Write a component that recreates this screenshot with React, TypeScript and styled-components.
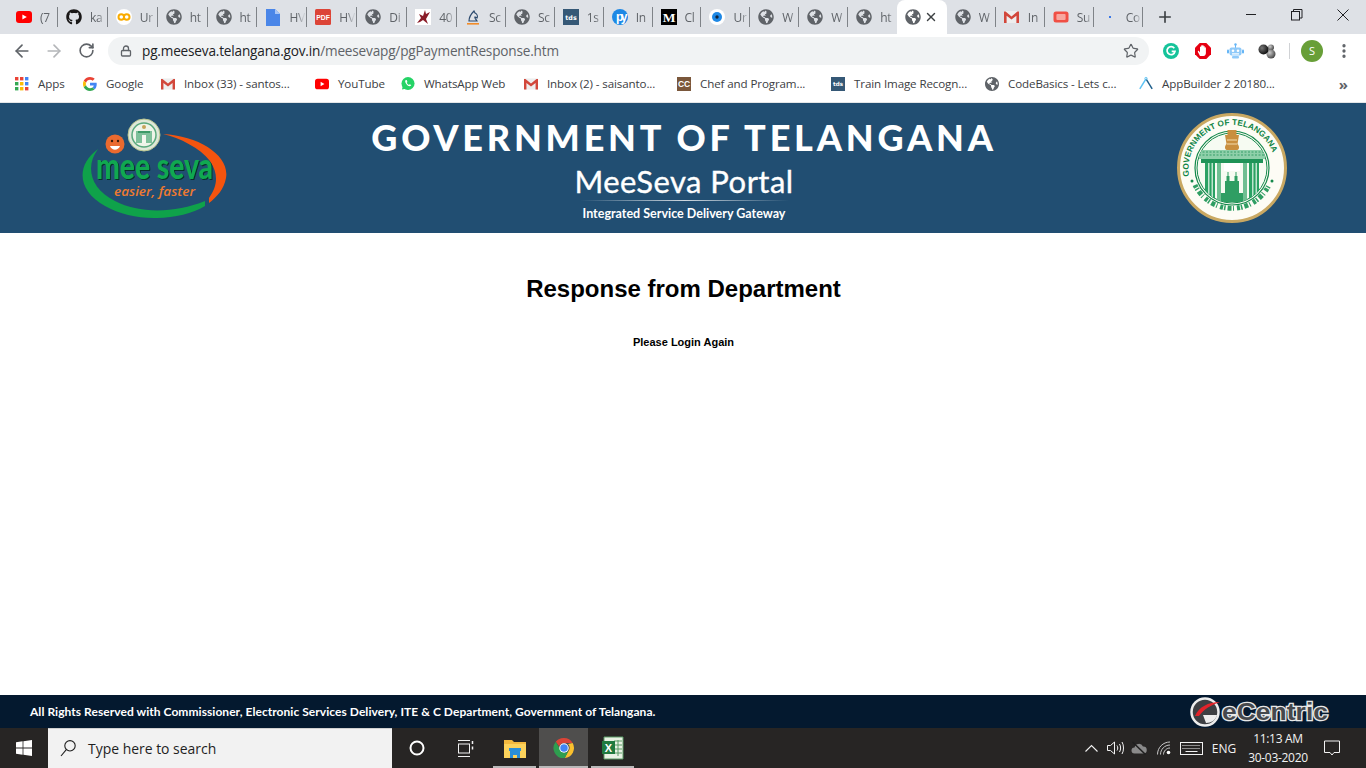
import React from "react";
import styled, { createGlobalStyle } from "styled-components";
import { FaGithub, FaGlobeAmericas } from "react-icons/fa";
import { ArrowLeft, ArrowRight, Lock, MoreVertical, Plus, RotateCw, Star, X } from "lucide-react";

const Global = createGlobalStyle`
  html, body { margin: 0; padding: 0; background: #fff; overflow: hidden; }
  * { box-sizing: border-box; }
`;

const Page = styled.div`
  width: 1366px;
  height: 768px;
  display: flex;
  flex-direction: column;
  font-family: "Open Sans", "Liberation Sans", sans-serif;
`;

/* ---------- tab strip ---------- */
const TabStrip = styled.div`
  height: 34px;
  flex: none;
  display: flex;
  background: #dee1e6;
  padding-left: 8px;
`;
const Tab = styled.div<{ $active?: boolean; $noSep?: boolean; $w: number }>`
  width: ${(p) => p.$w}px;
  flex: none;
  display: flex;
  align-items: center;
  padding: 0 0 0 8px;
  gap: ${(p) => (p.$active ? "3px" : "8px")};
  position: relative;
  background: ${(p) => (p.$active ? "#fff" : "transparent")};
  border-radius: ${(p) => (p.$active ? "8px 8px 0 0" : "0")};
  &::after {
    content: "";
    display: ${(p) => (p.$noSep ? "none" : "block")};
    position: absolute;
    right: 0;
    top: 7px;
    width: 1px;
    height: 20px;
    background: #7f8388;
  }
`;
const TabIcon = styled.span`
  width: 16px;
  height: 16px;
  flex: none;
  display: flex;
  align-items: center;
  justify-content: center;
  color: #5f6368;
`;
const TabLabel = styled.span`
  font-size: 12px;
  color: #5f6368;
  white-space: nowrap;
  width: 16px;
  letter-spacing: -0.3px;
  -webkit-mask-image: linear-gradient(90deg, #000 50%, rgba(0, 0, 0, 0.15) 90%);
  mask-image: linear-gradient(90deg, #000 50%, rgba(0, 0, 0, 0.15) 90%);
`;
const TabClose = styled.span`
  display: flex;
  color: #3c4043;
`;
const NewTab = styled.div`
  width: 22px;
  margin-left: 11px;
  display: flex;
  align-items: center;
  justify-content: center;
  color: #3c4043;
`;
const WindowControls = styled.div`
  margin-left: auto;
  display: flex;
`;
const WindowButton = styled.div`
  width: 46px;
  height: 29px;
  display: flex;
  align-items: center;
  justify-content: center;
  color: #202124;
`;

/* ---------- toolbar ---------- */
const Toolbar = styled.div`
  height: 33px;
  flex: none;
  display: flex;
  align-items: center;
  padding-left: 6px;
  background: #fff;
`;
const ToolButton = styled.div<{ $dim?: boolean }>`
  width: 32px;
  height: 28px;
  flex: none;
  display: flex;
  align-items: center;
  justify-content: center;
  color: ${(p) => (p.$dim ? "#b4b6b9" : "#5f6368")};
`;
const Omnibox = styled.div`
  width: 1041px;
  height: 28px;
  margin: 0 6px;
  flex: none;
  border-radius: 14px;
  background: #f1f3f4;
  display: flex;
  align-items: center;
  padding: 0 10px 0 12px;
  color: #5f6368;
`;
const Url = styled.div`
  margin-left: 10px;
  flex: 1;
  font-size: 13.6px;
  letter-spacing: -0.18px;
  color: #5f6368;
  white-space: nowrap;
  b {
    font-weight: 400;
    color: #202124;
  }
`;
const ToolSep = styled.div`
  width: 1px;
  height: 16px;
  margin: 0 6px;
  background: #d0d2d5;
  flex: none;
`;
const Avatar = styled.div`
  width: 22px;
  height: 22px;
  border-radius: 50%;
  background: #689f38;
  color: #fff;
  font-size: 11px;
  display: flex;
  align-items: center;
  justify-content: center;
`;

/* ---------- bookmarks ---------- */
const BookmarkBar = styled.div`
  height: 36px;
  flex: none;
  display: flex;
  align-items: center;
  padding: 0 0 2px 15px;
  background: #fff;
  border-bottom: 1px solid #e4e6e8;
`;
const Bookmark = styled.div<{ $w: number }>`
  width: ${(p) => p.$w}px;
  flex: none;
  display: flex;
  align-items: center;
  gap: 9px;
`;
const BookmarkIcon = styled.span`
  width: 14px;
  height: 16px;
  flex: none;
  display: flex;
  align-items: center;
  justify-content: center;
  color: #5f6368;
`;
const BookmarkText = styled.span`
  font-size: 11.6px;
  letter-spacing: -0.12px;
  color: #3c4043;
  white-space: nowrap;
`;
const Overflow = styled.div`
  margin-left: auto;
  margin-right: 18px;
  color: #5f6368;
  font-size: 15px;
  line-height: 16px;
  font-weight: 700;
`;

/* ---------- site ---------- */
const SiteHeader = styled.header`
  height: 130px;
  flex: none;
  background: #214e72;
  display: grid;
  grid-template-columns: 1fr auto 1fr;
  align-items: center;
`;
const LogoCell = styled.div`
  padding-left: 81px;
  display: flex;
`;
const SealCell = styled.div`
  padding-right: 79px;
  display: flex;
  justify-content: flex-end;
`;
const HeaderText = styled.div`
  align-self: start;
  display: flex;
  flex-direction: column;
  align-items: center;
  color: #fff;
  font-family: Lato, "Open Sans", sans-serif;
  padding: 12px 0 0 2px;
`;
const SiteTitle = styled.div`
  font-size: 36px;
  line-height: 44px;
  font-weight: 900;
  letter-spacing: 3.8px;
  white-space: nowrap;
`;
const SiteSub = styled.div`
  font-size: 31px;
  line-height: 44px;
  font-weight: 400;
  letter-spacing: 0.45px;
  -webkit-text-stroke: 0.35px #fff;
  white-space: nowrap;
`;
const SiteRule = styled.div`
  width: 209px;
  height: 1px;
  margin-top: -3px;
  background: linear-gradient(90deg, transparent, #cfd8df 50%, transparent);
`;
const SiteTag = styled.div`
  font-size: 12.5px;
  line-height: 25px;
  font-weight: 700;
  white-space: nowrap;
`;
const Main = styled.main`
  flex: 1;
  background: #fff;
  display: flex;
  flex-direction: column;
  align-items: center;
  padding: 42px 0 0 1px;
  font-family: "Liberation Sans", Arial, sans-serif;
  color: #000;
`;
const Heading = styled.h1`
  margin: 0;
  font-size: 24px;
  line-height: 28px;
  font-weight: 700;
`;
const Message = styled.p`
  margin: 32px 0 0;
  font-size: 11px;
  line-height: 14px;
  font-weight: 700;
`;
const SiteFooter = styled.footer`
  height: 33px;
  flex: none;
  background: #04192f;
  display: flex;
  align-items: center;
  justify-content: space-between;
  padding: 0 35px 0 30px;
  color: #fff;
  font-family: Lato, "Open Sans", sans-serif;
  font-size: 12px;
  letter-spacing: 0.05px;
  font-weight: 700;
`;

/* ---------- taskbar ---------- */
const Taskbar = styled.div`
  height: 40px;
  flex: none;
  background: #272524;
  display: flex;
  align-items: stretch;
  color: #fff;
`;
const StartButton = styled.div`
  width: 48px;
  display: flex;
  align-items: center;
  justify-content: center;
`;
const SearchBox = styled.div`
  width: 344px;
  background: #f2f2f2;
  display: flex;
  align-items: center;
  gap: 12px;
  padding-left: 12px;
  color: #1f1f1f;
  font-size: 13.95px;
  border-top: 1px solid #d0d0d0;
`;
const TaskButton = styled.div<{ $active?: boolean; $running?: boolean }>`
  width: 49px;
  flex: none;
  display: flex;
  align-items: center;
  justify-content: center;
  position: relative;
  background: ${(p) => (p.$active ? "#4f4e4d" : "transparent")};
  &::after {
    content: "";
    display: ${(p) => (p.$running ? "block" : "none")};
    position: absolute;
    left: ${(p) => (p.$active ? "0" : "3px")};
    right: ${(p) => (p.$active ? "0" : "3px")};
    bottom: 0;
    height: 2px;
    background: #b9b9b9;
  }
`;
const Tray = styled.div`
  margin-left: auto;
  display: flex;
  align-items: center;
`;
const TrayIcon = styled.div<{ $w: number }>`
  width: ${(p) => p.$w}px;
  height: 100%;
  flex: none;
  display: flex;
  align-items: center;
  justify-content: center;
  font-size: 12px;
  color: #f2f2f2;
`;
const Clock = styled.div`
  width: 76px;
  text-align: center;
  font-size: 12px;
  line-height: 19px;
  color: #f2f2f2;
  letter-spacing: -0.3px;
`;

/* ---------- icons ---------- */
const Globe = ({ size = 16 }: { size?: number }) => <FaGlobeAmericas size={size} color="#5f6368" />;

const Youtube = ({ w = 16 }: { w?: number }) => (
  <svg width={w} height={12} viewBox="0 0 16 12">
    <rect width="16" height="12" rx="3" fill="#f00" />
    <path d="M6.4 3.4 L10.8 6 L6.4 8.6Z" fill="#fff" />
  </svg>
);
const Gmail = () => (
  <svg width="15" height="12" viewBox="0 0 15 12">
    <path d="M0 0h15v12h-15z" fill="#eee" />
    <path d="M0 12V0.6h1.6L7.5 5.4 13.4.6H15V12h-2.6V4.8L7.5 8.6 2.6 4.8V12z" fill="#d2473b" />
  </svg>
);
const Colab = () => (
  <svg width="16" height="16" viewBox="0 0 16 16">
    <circle cx="8" cy="8" r="8" fill="#fff" />
    <circle cx="5.3" cy="8" r="2.8" fill="none" stroke="#f9ab00" strokeWidth="2" />
    <circle cx="10.7" cy="8" r="2.8" fill="none" stroke="#f9ab00" strokeWidth="2" />
  </svg>
);
const Doc = () => (
  <svg width="14" height="17" viewBox="0 0 14 17">
    <path d="M0 0h9l5 5v12H0z" fill="#4a86e8" />
    <path d="M9 0l5 5H9z" fill="#a9c6f5" />
  </svg>
);
const Pdf = () => (
  <svg width="16" height="16" viewBox="0 0 16 16">
    <rect width="16" height="16" rx="1.5" fill="#dc4437" />
    <text x="8" y="10.8" textAnchor="middle" fontSize="6.8" fontWeight="700" fontFamily="Liberation Sans" fill="#fff">PDF</text>
  </svg>
);
const Eagle = () => (
  <svg width="16" height="16" viewBox="0 0 16 16">
    <rect width="16" height="16" fill="#fff" />
    <path d="M2 14 L6 9 L4 5 L8 7 L10 1 L11 5 L15 3 L11 10 L13 15 L8 11 L5 13z" fill="#8a1c28" />
  </svg>
);
const Knight = () => (
  <svg width="16" height="16" viewBox="0 0 16 16">
    <path d="M4 12 C4 8 6 5 9 2 L10 4 C12 5 13 7 12 9 L10 8 C9 9 11 10 12 12z" fill="none" stroke="#2c4a6e" strokeWidth="1.2" />
    <rect x="2" y="14" width="12" height="1.6" fill="#f28c28" />
  </svg>
);
const Tds = ({ s = 16 }: { s?: number }) => (
  <svg width={s} height={s} viewBox="0 0 16 16">
    <rect width="16" height="16" fill="#355876" />
    <text x="8" y="10.5" textAnchor="middle" fontSize="6.4" fontWeight="700" fontFamily="DejaVu Sans" fill="#fff">tds</text>
  </svg>
);
const Py = () => (
  <svg width="16" height="16" viewBox="0 0 16 16">
    <circle cx="8" cy="8" r="8" fill="#1e88e5" />
    <text x="4" y="12" fontSize="12" fontWeight="700" fontFamily="Liberation Sans" fill="#fff" textLength="11.5">py</text>
  </svg>
);
const Medium = () => (
  <svg width="16" height="16" viewBox="0 0 16 16">
    <rect width="16" height="16" fill="#000" />
    <text x="8" y="13" textAnchor="middle" fontSize="13.5" fontWeight="700" fontFamily="Liberation Serif" fill="#fff">M</text>
  </svg>
);
const Target = () => (
  <svg width="16" height="16" viewBox="0 0 16 16">
    <circle cx="8" cy="8" r="8" fill="#fff" />
    <circle cx="8" cy="8" r="5" fill="#1e88e5" />
    <circle cx="8" cy="8" r="1.7" fill="#10233a" />
  </svg>
);
const ZoomRec = () => (
  <svg width="16" height="12" viewBox="0 0 16 12">
    <rect x="0.5" y="0.5" width="15" height="11" rx="2.5" fill="#f05045" />
    <rect x="3.4" y="3" width="9.2" height="6" rx="1" fill="#f8a79f" />
  </svg>
);
const Dot = () => (
  <svg width="16" height="16" viewBox="0 0 16 16">
    <rect x="7" y="7" width="2" height="2" fill="#3b78e7" />
  </svg>
);
const AppsGrid = () => (
  <svg width="14" height="14" viewBox="0 0 14 14">
    {["#ea4335", "#ea4335", "#4285f4", "#34a853", "#fbbc05", "#4285f4", "#34a853", "#fbbc05", "#ea4335"].map((c, i) => (
      <rect key={i} x={(i % 3) * 5} y={Math.floor(i / 3) * 5} width="3.4" height="3.4" fill={c} />
    ))}
  </svg>
);
const GoogleG = () => (
  <svg width="14" height="14" viewBox="0 0 48 48">
    <path fill="#EA4335" d="M24 9.5c3.5 0 6.7 1.2 9.2 3.6l6.9-6.9C35.9 2.4 30.5 0 24 0 14.6 0 6.5 5.4 2.6 13.2l8 6.2C12.4 13.7 17.7 9.5 24 9.5z" />
    <path fill="#4285F4" d="M47 24.5c0-1.6-.1-3.1-.4-4.5H24v9h12.9c-.6 3-2.2 5.5-4.7 7.2l7.7 6c4.5-4.1 7.1-10.2 7.1-17.7z" />
    <path fill="#FBBC05" d="M10.5 28.6c-.5-1.4-.8-3-.8-4.6s.3-3.2.8-4.6l-8-6.2C.9 16.4 0 20.1 0 24s.9 7.6 2.6 10.8l7.9-6.2z" />
    <path fill="#34A853" d="M24 48c6.5 0 11.9-2.1 15.9-5.8l-7.7-6c-2.2 1.4-5 2.3-8.2 2.3-6.3 0-11.6-4.2-13.5-9.9l-8 6.2C6.5 42.6 14.6 48 24 48z" />
  </svg>
);
const CC = () => (
  <svg width="16" height="16" viewBox="0 0 16 16">
    <rect width="16" height="16" fill="#7a573b" />
    <text x="8" y="11.8" textAnchor="middle" fontSize="10" fontWeight="700" fontFamily="Liberation Sans" fill="#fff" textLength="14" lengthAdjust="spacingAndGlyphs">CC</text>
  </svg>
);
const Compass = () => (
  <svg width="17" height="17" viewBox="0 0 17 17" fill="none" strokeWidth="1.8">
    <path d="M8.5 3 L1 15" stroke="#5cc3f5" />
    <path d="M8.5 3 L16 15" stroke="#1f5f8b" />
    <circle cx="8.5" cy="2.5" r="1.5" stroke="#5cc3f5" strokeWidth="1" />
  </svg>
);
const WhatsApp = () => (
  <svg width="15" height="15" viewBox="0 0 15 15">
    <circle cx="7.5" cy="7.5" r="7" fill="#25d366" />
    <path d="M1 14l1-4 3 3z" fill="#25d366" />
    <path d="M5.2 3.8c-1 .7-1 2 .1 3.6 1 1.5 2.5 3 4 3 .9 0 1.5-.6 1.6-1.3L9.3 8.2l-.8.8C7.5 8.5 6.600 7.5 6.200 6.600l.7-.8-.8-2z" fill="#fff" />
  </svg>
);
const Grammarly = () => (
  <svg width="16" height="16" viewBox="0 0 16 16">
    <circle cx="8" cy="8" r="8" fill="#15c39a" />
    <path d="M11.3 5.3A4 4 0 1 0 12 8.4H8.7" fill="none" stroke="#fff" strokeWidth="1.7" />
  </svg>
);
const AdBlock = () => (
  <svg width="16" height="16" viewBox="0 0 16 16">
    <path d="M4.7 0h6.6L16 4.7v6.6L11.3 16H4.7L0 11.3V4.7z" fill="#e60012" />
    <path d="M5 13C4.3 11.5 3 9.5 2.8 8.5c0-.7.8-.9 1.3-.2l.9 1.200V4c0-.8 1.100-.8 1.100 0V2.900c0-.8 1.200-.8 1.200 0v-.3c0-.8 1.200-.8 1.200 0v.9c0-.8 1.200-.8 1.200 0v1.200c0-.7 1.200-.7 1.200 0v5.300c0 1.500-.8 3-2.400 3z" fill="#fff" />
  </svg>
);
const Robot = () => (
  <svg width="17" height="16" viewBox="0 0 17 16">
    <circle cx="8.5" cy="1.5" r="1.2" fill="#64b5f6" />
    <rect x="8" y="2" width="1" height="3" fill="#64b5f6" />
    <rect x="2.5" y="4.5" width="12" height="8" rx="2" fill="#90caf9" />
    <rect x="0" y="6.5" width="2" height="4" rx="1" fill="#64b5f6" />
    <rect x="15" y="6.5" width="2" height="4" rx="1" fill="#64b5f6" />
    <circle cx="6" cy="7.7" r="1.3" fill="#fff" />
    <circle cx="11" cy="7.7" r="1.3" fill="#fff" />
    <rect x="5" y="10.3" width="7" height="1.2" fill="#fff" />
    <rect x="5" y="13" width="7" height="2.5" rx="1" fill="#90caf9" />
  </svg>
);
const Balls = () => (
  <svg width="18" height="16" viewBox="0 0 18 16">
    <defs>
      <radialGradient id="b1" cx="35%" cy="35%" r="70%"><stop offset="0" stopColor="#777" /><stop offset="1" stopColor="#0a0a0a" /></radialGradient>
      <radialGradient id="b2" cx="35%" cy="35%" r="70%"><stop offset="0" stopColor="#ccc" /><stop offset="1" stopColor="#444" /></radialGradient>
    </defs>
    <circle cx="13" cy="4.5" r="3" fill="url(#b2)" />
    <circle cx="13" cy="11" r="4.5" fill="url(#b2)" />
    <circle cx="5.5" cy="6.5" r="5" fill="url(#b1)" />
  </svg>
);
const WinMin = () => <svg width="11" height="11"><path d="M0 5.5h10" stroke="#202124" /></svg>;
const WinRestore = () => (
  <svg width="12" height="12" fill="none" stroke="#202124">
    <rect x="0.5" y="2.5" width="8" height="8.5" />
    <path d="M2.5 2.5v-2h8.500v8.500h-2" />
  </svg>
);
const WinClose = () => <svg width="12" height="12"><path d="M.5.5l11 11M11.500.5l-11 11" stroke="#202124" /></svg>;

const MeeSevaLogo = () => (
  <svg width="146" height="100" viewBox="21 12 146 100">
    <path d="M38 43C15 60 18 85 45 100C75 117 120 115 145 100L145 95C115 107 80 108 55 95C30 83 25 60 38 43Z" fill="#0fa24a" />
    <path d="M103 28C140 30 170 50 166 72C164 83 157 91 149 97L149 92C156 82 160 70 150 55C140 42 120 32 103 28Z" fill="#f4540f" />
    <circle cx="55" cy="38" r="9.5" fill="#ea6a2f" />
    <circle cx="52" cy="35" r="1.2" fill="#3a1c0c" />
    <circle cx="58" cy="35" r="1.2" fill="#3a1c0c" />
    <path d="M50 40C52 45 58 45 60 40Z" fill="#fff" />
    <circle cx="84" cy="29" r="16" fill="#dfe8d8" stroke="#b9c58f" />
    <circle cx="84" cy="29" r="12" fill="#eef4e8" stroke="#5aa97d" strokeWidth="1.5" />
    <path d="M76 37V25h16v12z" fill="#7fc09a" />
    <path d="M78 27h12v-2h-12z" fill="#3d9a67" />
    <path d="M82 37v-8h4v8z" fill="#f4f7ee" />
    <circle cx="84" cy="21" r="2" fill="#c4a35a" />
    <text
      x="36"
      y="73"
      fontFamily="Lato, sans-serif"
      fontWeight="900"
      fontSize="36"
      fill="#10a850"
      textLength="117"
      lengthAdjust="spacingAndGlyphs"
      style={{ filter: "drop-shadow(1px 1.5px 0 #07312a)" }}
    >
      mee seva
    </text>
    <text x="54" y="90" fontFamily="Open Sans, sans-serif" fontStyle="italic" fontWeight="600" fontSize="12" fill="#ee7a30" textLength="81" lengthAdjust="spacingAndGlyphs">easier, faster</text>
  </svg>
);

const Emblem = () => (
  <svg width="110" height="110" viewBox="0 0 110 110">
    <defs>
      <path id="seal-top" d="M12.800 66 A43.500 43.500 0 1 1 97.200 66" />
      <clipPath id="seal-inner"><circle cx="55" cy="55" r="35" /></clipPath>
    </defs>
    <circle cx="55" cy="55" r="53.5" fill="#fdfcf5" stroke="#c9a862" strokeWidth="3" />
    <text fontFamily="Liberation Sans, sans-serif" fontWeight="700" fontSize="8.2" fill="#0f8445">
      <textPath href="#seal-top" startOffset="3" textLength="128" lengthAdjust="spacing">GOVERNMENT OF TELANGANA</textPath>
    </text>
    <path d="M18 72 A41 41 0 0 0 92 72" fill="none" stroke="#2f9e63" strokeWidth="5" strokeDasharray="3 1 1.5 2 4 1.5 1 3" />
    <circle cx="55" cy="55" r="37" fill="none" stroke="#15894c" strokeWidth="1.2" />
    <circle cx="55" cy="55" r="35" fill="#f6fbf2" stroke="#15894c" strokeWidth="1" />
    <g clipPath="url(#seal-inner)">
      <path d="M22 37h66v9H22z" fill="#8fd0aa" />
      <path d="M22 39h66M22 42h66" stroke="#1f9358" strokeWidth="0.8" strokeDasharray="2 1.5" />
      <path d="M24 46h62v4H24z" fill="#1f9358" />
      <path d="M28 50h10v38H28zM72 50h10v38H72z" fill="#2aa163" />
      <path d="M31 50h1.5v38H31zM34.5 50H36v38h-1.5zM75 50h1.5v38H75zM78.5 50H80v38h-1.5z" fill="#bfe5cf" />
      <path d="M40 50h4v38h-4zM66 50h4v38h-4z" fill="#6fbf92" />
      <path d="M47 50h16v8H47z" fill="#fff" />
      <path d="M48 80V68h1.5v-5h1v-4h1v4h1v5h5v-5h1v-4h1v4h1v5H62v12z" fill="#2f9e63" />
      <path d="M44 80h22v9H44z" fill="#2f9e63" />
    </g>
    <path d="M50.5 17h9v5h2.500l-1.500 9c2 2 2 5 0 6H49.500c-2-1-2-4 0-6L48 22h2.500z" fill="#c98f3f" />
    <path d="M50 27h10M50 31h10" stroke="#f3dcae" strokeWidth="1" />
    <circle cx="15" cy="68" r="1.5" fill="#15894c" />
    <circle cx="95" cy="68" r="1.5" fill="#15894c" />
  </svg>
);

const ECentric = () => (
  <svg width="142" height="32" viewBox="0 0 142 32">
    <circle cx="16" cy="16" r="13.5" fill="#3d3f43" stroke="#ededed" strokeWidth="2.5" />
    <path d="M6 20C10 11 19 6 31 6C22 9 15 13 10 20z" fill="#e2232a" />
    <path d="M14 19h14c-1 5-6 8-11 8z" fill="#ededed" />
    <text x="33" y="24" fontFamily="Liberation Sans, sans-serif" fontWeight="700" fontSize="24" fill="#45484d" stroke="#e8e8e8" strokeWidth="2.6" paintOrder="stroke" textLength="106" lengthAdjust="spacingAndGlyphs">eCentric</text>
  </svg>
);

const WinLogo = () => (
  <svg width="16" height="16" viewBox="0 0 16 16" fill="#fff">
    <path d="M0 2.2L6.6 1.3V7.6H0zM7.4 1.2L16 0V7.6H7.4zM0 8.4H6.6V14.7L0 13.8zM7.4 8.4H16V16L7.4 14.8z" />
  </svg>
);
const SearchGlyph = () => (
  <svg width="16" height="17" viewBox="0 0 16 17" fill="none" stroke="#1f1f1f" strokeWidth="1.1">
    <circle cx="10" cy="5.8" r="5.2" />
    <path d="M6.3 9.6L1 16" />
  </svg>
);
const Cortana = () => (
  <svg width="16" height="16" viewBox="0 0 16 16" fill="none" stroke="#fff" strokeWidth="2">
    <circle cx="8" cy="8" r="6.5" />
  </svg>
);
const TaskView = () => (
  <svg width="17" height="17" viewBox="0 0 17 17" fill="none" stroke="#f2f2f2">
    <path d="M1 .5h12M1 16.5h12" />
    <rect x="1.5" y="4" width="11" height="9" />
    <path d="M15.5 1v3M15.5 6.5v3" strokeWidth="1.5" />
  </svg>
);
const Explorer = () => (
  <svg width="22" height="20" viewBox="0 0 22 20">
    <path d="M0 2h8l2 2h12v16H0z" fill="#f3b93f" />
    <path d="M0 6h22v14H0z" fill="#fcd25b" />
    <path d="M6 20v-7h10v7h-3v-3H9v3z" fill="#2a8ed8" />
    <rect x="5" y="10" width="12" height="3" fill="#2a8ed8" />
  </svg>
);
const ChromeIcon = () => (
  <svg width="24" height="24" viewBox="0 0 48 48">
    <path d="M24 4a20 20 0 0 1 17.3 10H24a10 10 0 0 0-9.5 6.9L7.6 11.5A20 20 0 0 1 24 4z" fill="#db4437" />
    <path d="M41.3 14A20 20 0 0 1 25.5 44L33 30a10 10 0 0 0-1-14z" fill="#fbc02d" />
    <path d="M7.6 11.5l8.6 15A10 10 0 0 0 33 30l-7.5 14A20 20 0 0 1 7.6 11.5z" fill="#2e9e4f" />
    <circle cx="24" cy="24" r="9.5" fill="#fff" />
    <circle cx="24" cy="24" r="7.5" fill="#4285f4" />
  </svg>
);
const ExcelIcon = () => (
  <svg width="24" height="24" viewBox="0 0 24 24">
    <path d="M3 1h19v22H3z" fill="#e8f2e4" stroke="#5b9c67" />
    <path d="M13 5h8M13 9h8M13 13h8M13 17h8M17 4v16" stroke="#5b9c67" strokeWidth="1" />
    <rect x="1" y="5" width="13" height="13" fill="#1f7a3f" />
    <text x="7.5" y="15.5" textAnchor="middle" fontSize="11" fontWeight="700" fontFamily="Liberation Sans" fill="#fff">X</text>
  </svg>
);
const Chevron = () => <svg width="13" height="8" fill="none" stroke="#f2f2f2" strokeWidth="1.1"><path d="M.5 7.5L6.5 1.5 12.5 7.5" /></svg>;
const Speaker = () => (
  <svg width="17" height="14" viewBox="0 0 17 14" fill="none" stroke="#f2f2f2">
    <path d="M.5 4.5h3l4-3.500v12l-4-3.500h-3z" />
    <path d="M10 4.5c1 1.500 1 3.500 0 5M12.500 3c1.500 2.500 1.500 5.500 0 8M15 1c2 3 2 9 0 12" />
  </svg>
);
const CloudOff = () => (
  <svg width="16" height="14" viewBox="0 0 16 14">
    <path d="M3.5 12.5a3 3 0 0 1 0-6 4.5 4.5 0 0 1 8.5-1 3.5 3.5 0 0 1 .5 7z" fill="#8a8a8a" />
    <path d="M1.5 1L14.5 13.5" stroke="#1f1f1f" strokeWidth="1.5" />
  </svg>
);
const Wifi = () => (
  <svg width="14" height="14" viewBox="0 0 14 14" fill="none" stroke="#c9c9c9">
    <path d="M.5 13.5C.5 6.5 6 1 13 1M3.5 13.5c0-5 4-9.5 9.5-9.5M6.5 13.5c0-3.5 3-6.5 6.5-6.5" />
    <circle cx="11.5" cy="11.5" r="1.8" fill="#fff" stroke="none" />
  </svg>
);
const Keyboard = () => (
  <svg width="23" height="13" viewBox="0 0 23 13" fill="none" stroke="#f2f2f2">
    <rect x=".5" y=".5" width="22" height="12" />
    <path d="M2.5 3.5h18M2.5 6.5h18" strokeDasharray="1 1" />
    <path d="M5.5 9.5h12" />
  </svg>
);
const Notify = () => (
  <svg width="16" height="16" viewBox="0 0 16 16" fill="none" stroke="#f2f2f2">
    <path d="M.5 1h15v11.5H10L8 15l-2-2.5H.5z" />
  </svg>
);

/* ---------- data ---------- */
const G = <Globe />;
const tabs: { icon: React.ReactNode; label: string; w: number }[] = [
  { icon: <Youtube />, label: "(7", w: 49.9 },
  { icon: <FaGithub size={16} color="#191717" />, label: "ka", w: 49.9 },
  { icon: <Colab />, label: "Ur", w: 49.9 },
  { icon: G, label: "ht", w: 49.9 },
  { icon: G, label: "ht", w: 49.9 },
  { icon: <Doc />, label: "HV", w: 49.9 },
  { icon: <Pdf />, label: "HV", w: 49.9 },
  { icon: G, label: "Di", w: 49.9 },
  { icon: <Eagle />, label: "40", w: 49.9 },
  { icon: <Knight />, label: "Sc", w: 48.9 },
  { icon: G, label: "Sc", w: 48.9 },
  { icon: <Tds />, label: "1s", w: 48.9 },
  { icon: <Py />, label: "In", w: 48.9 },
  { icon: <Medium />, label: "Cl", w: 48.9 },
  { icon: <Target />, label: "Ur", w: 48.9 },
  { icon: G, label: "W", w: 48.9 },
  { icon: G, label: "W", w: 48.9 },
  { icon: G, label: "ht", w: 48.9 },
  { icon: G, label: "", w: 49.8 },
  { icon: G, label: "W", w: 49 },
  { icon: <Gmail />, label: "In", w: 49 },
  { icon: <ZoomRec />, label: "Su", w: 49 },
  { icon: <Dot />, label: "Co", w: 49 },
];
const ACTIVE = 18;

const bookmarks: { icon: React.ReactNode; text: string; w: number }[] = [
  { icon: <AppsGrid />, text: "Apps", w: 68 },
  { icon: <GoogleG />, text: "Google", w: 78 },
  { icon: <Gmail />, text: "Inbox (33) - santos...", w: 154 },
  { icon: <Youtube w={14} />, text: "YouTube", w: 86 },
  { icon: <WhatsApp />, text: "WhatsApp Web", w: 123 },
  { icon: <Gmail />, text: "Inbox (2) - saisanto...", w: 153 },
  { icon: <CC />, text: "Chef and Program...", w: 154 },
  { icon: <Tds />, text: "Train Image Recogn...", w: 154 },
  { icon: <Globe />, text: "CodeBasics - Lets c...", w: 154 },
  { icon: <Compass />, text: "AppBuilder 2 20180...", w: 190 },
];

export default function App() {
  return (
    <Page>
      <Global />
      <TabStrip>
        {tabs.map((t, i) => (
          <Tab key={i} $w={t.w} $active={i === ACTIVE} $noSep={i === ACTIVE || i === ACTIVE - 1}>
            <TabIcon>{t.icon}</TabIcon>
            {i === ACTIVE ? (
              <TabClose>
                <X size={14} strokeWidth={2.4} />
              </TabClose>
            ) : (
              <TabLabel>{t.label}</TabLabel>
            )}
          </Tab>
        ))}
        <NewTab>
          <Plus size={18} strokeWidth={2.2} />
        </NewTab>
        <WindowControls>
          <WindowButton><WinMin /></WindowButton>
          <WindowButton><WinRestore /></WindowButton>
          <WindowButton><WinClose /></WindowButton>
        </WindowControls>
      </TabStrip>

      <Toolbar>
        <ToolButton><ArrowLeft size={20} strokeWidth={2} /></ToolButton>
        <ToolButton $dim><ArrowRight size={20} strokeWidth={2} /></ToolButton>
        <ToolButton><RotateCw size={17} strokeWidth={2.3} /></ToolButton>
        <Omnibox>
          <Lock size={12} strokeWidth={2.6} />
          <Url><b>pg.meeseva.telangana.gov.in</b>/meesevapg/pgPaymentResponse.htm</Url>
          <Star size={16} strokeWidth={1.8} />
        </Omnibox>
        <ToolButton><Grammarly /></ToolButton>
        <ToolButton><AdBlock /></ToolButton>
        <ToolButton><Robot /></ToolButton>
        <ToolButton><Balls /></ToolButton>
        <ToolSep />
        <ToolButton><Avatar>S</Avatar></ToolButton>
        <ToolButton><MoreVertical size={18} strokeWidth={2.4} /></ToolButton>
      </Toolbar>

      <BookmarkBar>
        {bookmarks.map((b) => (
          <Bookmark key={b.text} $w={b.w}>
            <BookmarkIcon>{b.icon}</BookmarkIcon>
            <BookmarkText>{b.text}</BookmarkText>
          </Bookmark>
        ))}
        <Overflow>»</Overflow>
      </BookmarkBar>

      <SiteHeader>
        <LogoCell><MeeSevaLogo /></LogoCell>
        <HeaderText>
          <SiteTitle>GOVERNMENT OF TELANGANA</SiteTitle>
          <SiteSub>MeeSeva Portal</SiteSub>
          <SiteRule />
          <SiteTag>Integrated Service Delivery Gateway</SiteTag>
        </HeaderText>
        <SealCell><Emblem /></SealCell>
      </SiteHeader>

      <Main>
        <Heading>Response from Department</Heading>
        <Message>Please Login Again</Message>
      </Main>

      <SiteFooter>
        <span>All Rights Reserved with Commissioner, Electronic Services Delivery, ITE &amp; C Department, Government of Telangana.</span>
        <ECentric />
      </SiteFooter>

      <Taskbar>
        <StartButton><WinLogo /></StartButton>
        <SearchBox><SearchGlyph />Type here to search</SearchBox>
        <TaskButton><Cortana /></TaskButton>
        <TaskButton><TaskView /></TaskButton>
        <TaskButton $running><Explorer /></TaskButton>
        <TaskButton $active $running><ChromeIcon /></TaskButton>
        <TaskButton $running><ExcelIcon /></TaskButton>
        <Tray>
          <TrayIcon $w={30}><Chevron /></TrayIcon>
          <TrayIcon $w={18}><Speaker /></TrayIcon>
          <TrayIcon $w={30}><CloudOff /></TrayIcon>
          <TrayIcon $w={20}><Wifi /></TrayIcon>
          <TrayIcon $w={34}><Keyboard /></TrayIcon>
          <TrayIcon $w={32}>ENG</TrayIcon>
          <Clock>11:13 AM<br />30-03-2020</Clock>
          <TrayIcon $w={32}><Notify /></TrayIcon>
          <TrayIcon $w={18} />
        </Tray>
      </Taskbar>
    </Page>
  );
}
